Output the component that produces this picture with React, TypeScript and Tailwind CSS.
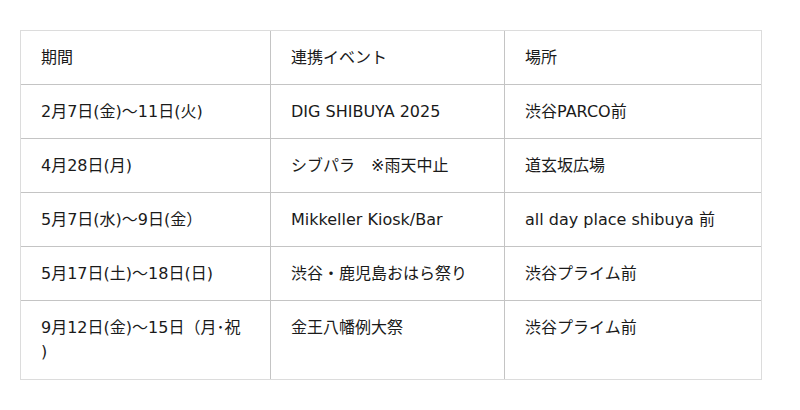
import React from "react";

const rows: React.ReactNode[][] = [
  ["期間", "連携イベント", "場所"],
  ["2月7日(金)〜11日(火)", "DIG SHIBUYA 2025", "渋谷PARCO前"],
  ["4月28日(月)", "シブパラ　※雨天中止", "道玄坂広場"],
  ["5月7日(水)〜9日(金）", "Mikkeller Kiosk/Bar", "all day place shibuya 前"],
  ["5月17日(土)〜18日(日)", "渋谷・鹿児島おはら祭り", "渋谷プライム前"],
  [
    <>
      9月12日(金)〜15日（月･祝
      <br />)
    </>,
    "金王八幡例大祭",
    "渋谷プライム前",
  ],
];

export default function App() {
  return (
    <div
      className="w-[800px] h-[410px] bg-white pt-[30px] pl-[20px] text-[16px] leading-[24px] text-[#1a1a1a]"
      style={{ fontFamily: '"DejaVu Sans", "Noto Sans CJK JP", sans-serif' }}
    >
      <div className="w-[742px] border border-[#dcdcdc]">
        {rows.map((r, i) => {
          const last = i === rows.length - 1;
          return (
            <div
              key={i}
              className={
                "grid grid-cols-[249px_234px_257px] " +
                (i > 0 ? "border-t border-[#c4c4c4] " : "") +
                (i === 0 ? "h-[53px]" : last ? "h-[79px]" : "h-[54px]")
              }
            >
              {r.map((c, j) => (
                <div
                  key={j}
                  className={
                    "pt-[15px] whitespace-nowrap " +
                    (j === 0 ? "pl-[20px] " : "pl-[20px] border-l border-[#c4c4c4] ")
                  }
                >
                  {c}
                </div>
              ))}
            </div>
          );
        })}
      </div>
    </div>
  );
}
